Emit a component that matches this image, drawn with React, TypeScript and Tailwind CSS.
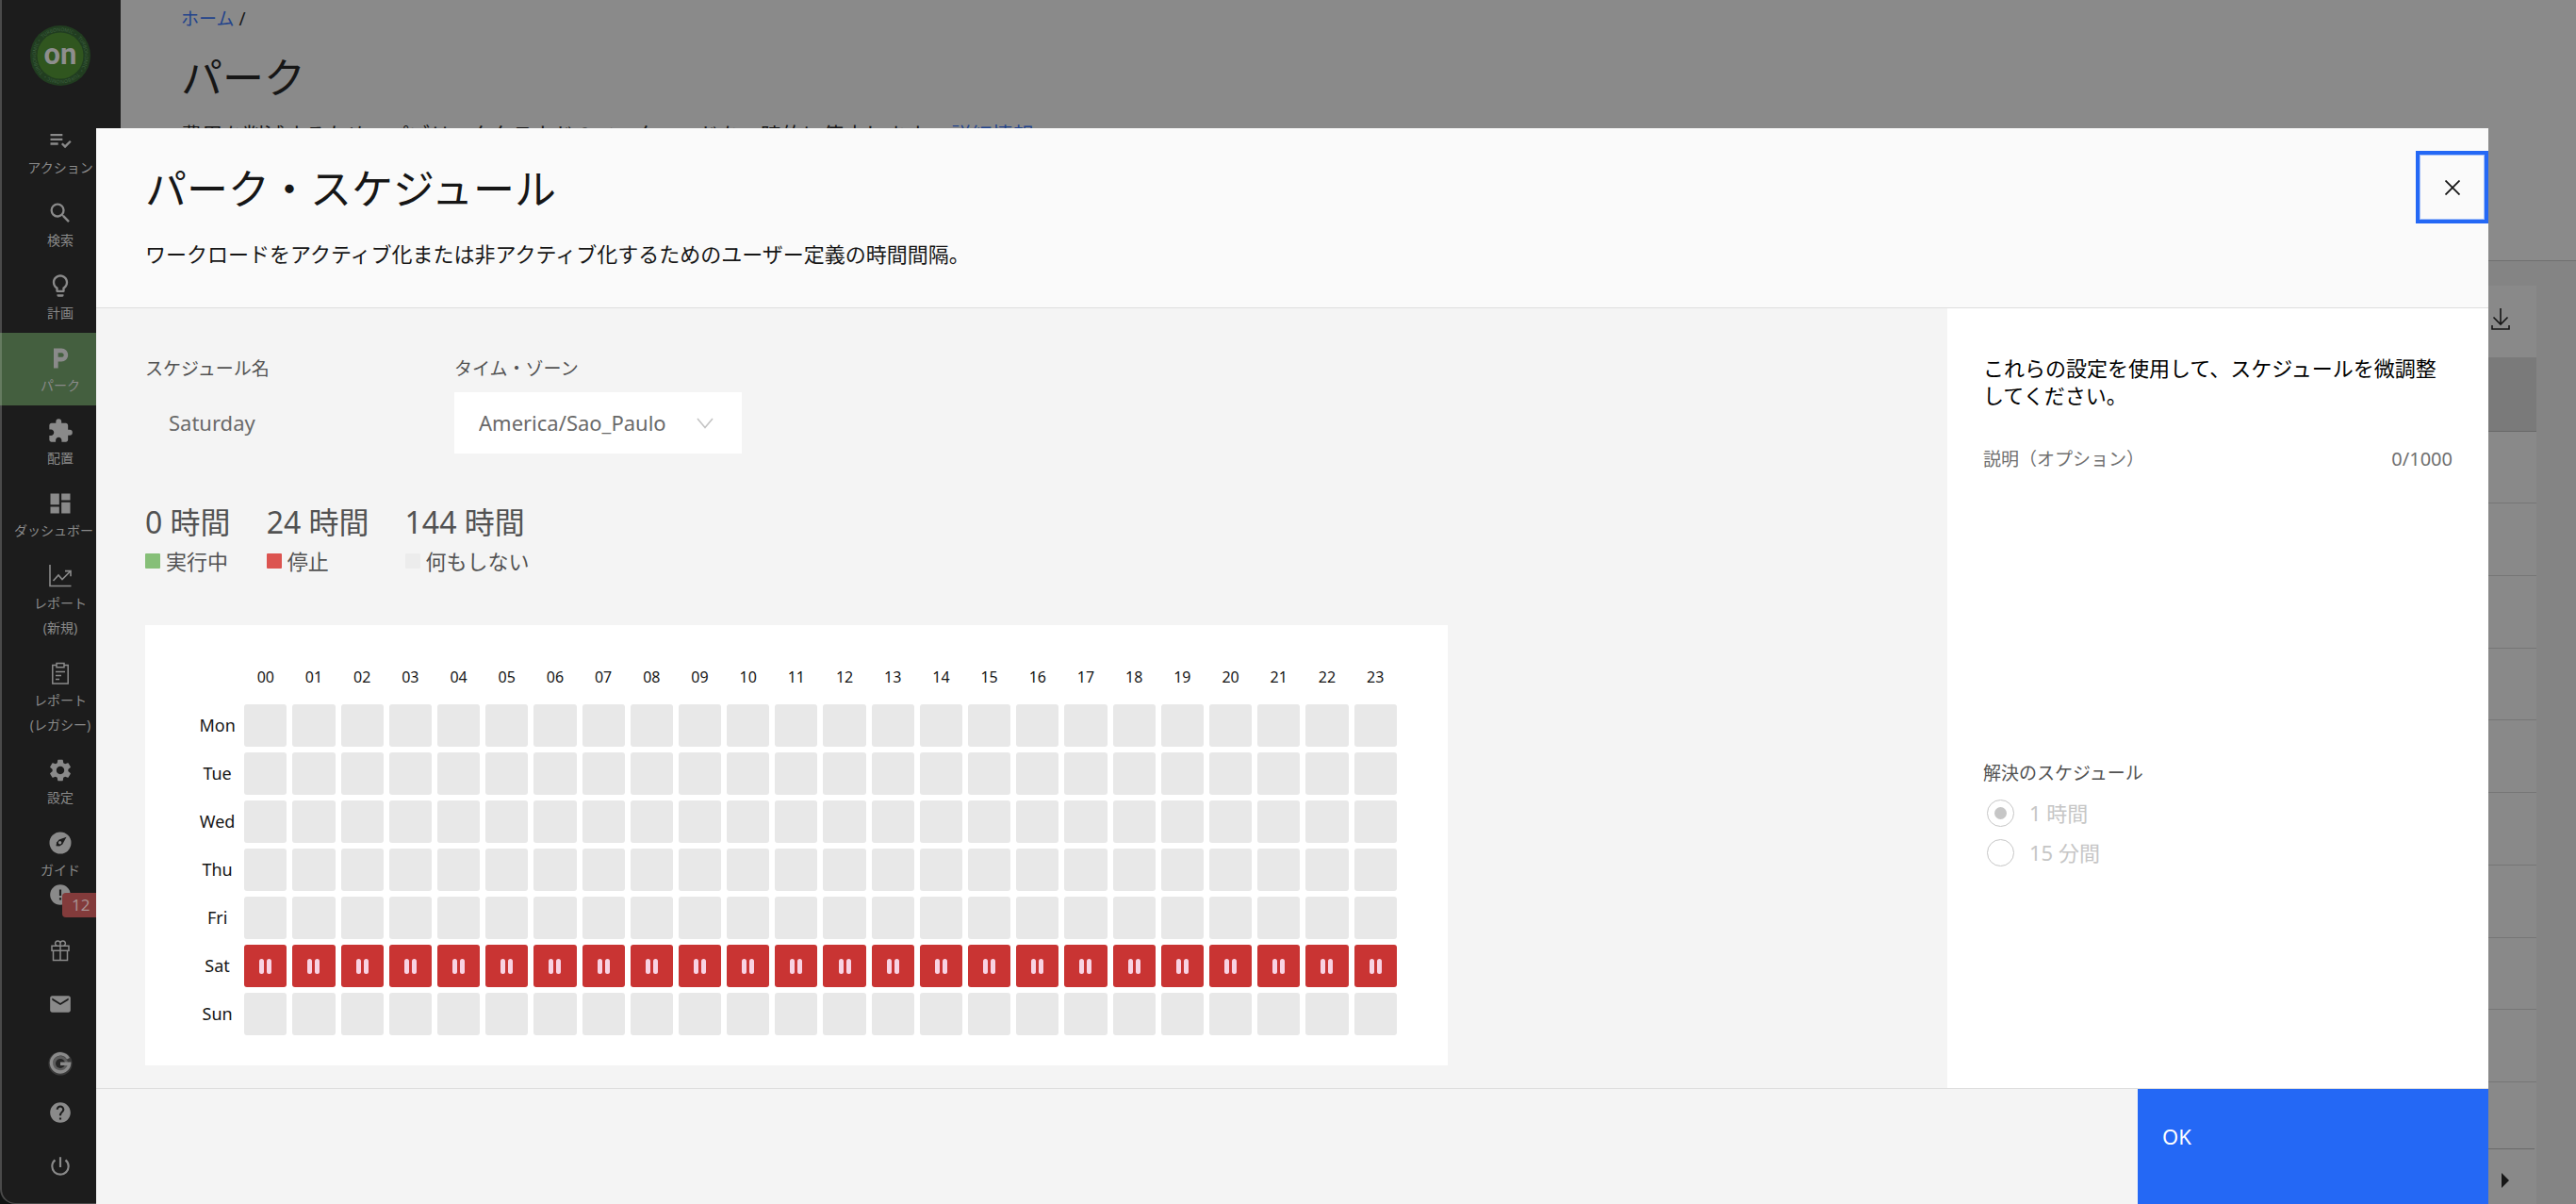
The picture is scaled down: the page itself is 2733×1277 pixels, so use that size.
import type { ReactNode } from "react";
import {
  MdDashboard,
  MdError,
  MdExtension,
  MdHelp,
  MdLightbulbOutline,
  MdLocalParking,
  MdMail,
  MdPlaylistAddCheck,
  MdPowerSettingsNew,
  MdSearch,
  MdSettings,
} from "react-icons/md";

const ChartIcon = () => (
  <svg viewBox="0 0 26 26" className="size-[26px] shrink-0" fill="none" stroke="currentColor" strokeWidth="1.6" aria-hidden="true">
    <path d="M2 1v22.5h22.5M5.5 18l5.5-6 4 4.5L23.5 8M18 7.6h6v5.6" />
  </svg>
);

const ClipboardIcon = () => (
  <svg viewBox="0 0 26 26" className="size-[26px] shrink-0" fill="none" stroke="currentColor" strokeWidth="1.5" aria-hidden="true">
    <path d="M9 4.5H4.8V24h16.4V4.5H17M9 2.5h8v4.2H9zM8 11.5h10M8 15.5h6M8 19.5h4" />
  </svg>
);

const CompassIcon = () => (
  <svg viewBox="0 0 26 26" className="size-[26px] shrink-0" aria-hidden="true">
    <circle cx="13" cy="13" r="11.5" fill="currentColor" />
    <path d="M19.5 6.8l-4.2 7.8-3.2 1.8-3.6-.2.6-3.8 2.6-3z" fill="#1c1c1c" />
    <circle cx="12.6" cy="12.8" r="1.7" fill="currentColor" />
  </svg>
);

const GiftIcon = () => (
  <svg viewBox="0 0 26 26" className="size-[26px]" fill="none" stroke="currentColor" strokeWidth="1.5" aria-hidden="true">
    <path d="M4 8.2h18v5H4zM5.5 13.2h15v10.2h-15zM13 8.2v15.2M13 8.2H9.6a2.7 2.7 0 1 1 3.4-3zM13 8.2h3.4a2.7 2.7 0 1 0-3.4-3z" />
  </svg>
);

const GIcon = () => (
  <svg viewBox="0 0 26 26" className="size-[26px]" aria-hidden="true">
    <circle cx="13" cy="13" r="12.6" fill="#3a3a3a" />
    <circle cx="13" cy="13" r="8" fill="#5c5c5c" />
    <circle cx="13" cy="13" r="5" fill="#262626" />
    <path d="M21.500 7.800a9.600 9.600 0 1 0 1.100 5.400H13" fill="none" stroke="currentColor" strokeWidth="3.400" />
  </svg>
);

const Logo = () => (
  <svg viewBox="0 0 64 64" className="size-16" role="img" aria-label="Turbonomic">
    <defs>
      <path id="ring-top" d="M13.600 13.600A26 26 0 0 1 50.400 13.600" />
      <path id="ring-right" d="M50.400 13.600A26 26 0 0 1 50.400 50.400" />
      <path id="ring-bottom" d="M50.400 50.400A26 26 0 0 1 13.600 50.400" />
      <path id="ring-left" d="M13.600 50.400A26 26 0 0 1 13.600 13.600" />
    </defs>
    <circle cx="32" cy="32" r="32" fill="#213d20" />
    <circle cx="32" cy="32" r="24.500" fill="#30561f" />
    {["#ring-top", "#ring-right", "#ring-bottom", "#ring-left"].map((arc) => (
      <text key={arc} fontSize="5" fill="#3f6040" fontFamily="Noto Sans, sans-serif">
        <textPath href={arc}>TURBONOMIC •</textPath>
      </text>
    ))}
    <text x="32" y="41" textAnchor="middle" fontSize="31" fontWeight="700" fill="#8e8e8e" fontFamily="Roboto, sans-serif">
      on
    </text>
  </svg>
);

type NavItem = { icon: ReactNode; lines: string[]; active?: boolean };

const navItems: NavItem[] = [
  { icon: <MdPlaylistAddCheck size={28} />, lines: ["アクション"] },
  { icon: <MdSearch size={28} />, lines: ["検索"] },
  { icon: <MdLightbulbOutline size={28} />, lines: ["計画"] },
  { icon: <MdLocalParking size={28} />, lines: ["パーク"], active: true },
  { icon: <MdExtension size={28} />, lines: ["配置"] },
  { icon: <MdDashboard size={28} />, lines: ["ダッシュボード"] },
  { icon: <ChartIcon />, lines: ["レポート", "(新規)"] },
  { icon: <ClipboardIcon />, lines: ["レポート", "(レガシー)"] },
  { icon: <MdSettings size={28} />, lines: ["設定"] },
  { icon: <CompassIcon />, lines: ["ガイド"] },
];

const Sidebar = () => (
  <aside className="w-32 shrink-0 bg-[#101212]">
    <nav className="flex h-full flex-col rounded-bl-2xl border-b border-l-2 border-[#4a4a4a] bg-[#1c1c1c] text-[#8a8a8a]">
      <a href="#home" className="mt-[27px] mb-[31px] -ml-0.5 self-center">
        <Logo />
      </a>
      {navItems.map((item) => (
        <a
          key={item.lines.join("")}
          href="#nav"
          className={`-ml-0.5 flex shrink-0 flex-col items-center pt-[13px] ${item.lines.length > 1 ? "h-[103px]" : "h-[77px] last-of-type:h-[59px]"} ${
            item.active ? "border-l-2 border-[#657b60] bg-[#445f3f] pr-0.5" : ""
          }`}
        >
          <span className="flex h-7 shrink-0 items-center">{item.icon}</span>
          <span className="mt-0.5 flex flex-col items-center text-sm leading-[26px] whitespace-nowrap">
            {item.lines.map((line) => (
              <span key={line}>{line}</span>
            ))}
          </span>
        </a>
      ))}
      <button type="button" aria-label="通知" className="relative mt-2.5 -ml-0.5 self-center">
        <MdError size={26} />
        <span className="absolute top-[11px] left-[15px] h-[26px] w-12 rounded bg-[#833b3b] pl-2.5 text-left text-[17px] leading-[26px] text-[#a89090]">12</span>
      </button>
      <button type="button" aria-label="新機能" className="mt-[33px] -ml-0.5 self-center">
        <GiftIcon />
      </button>
      <button type="button" aria-label="メール" className="mt-[31px] -ml-0.5 self-center">
        <MdMail size={26} />
      </button>
      <button type="button" aria-label="グリーンサークル" className="mt-[37px] -ml-0.5 self-center">
        <GIcon />
      </button>
      <button type="button" aria-label="ヘルプ" className="mt-[26px] -ml-0.5 self-center">
        <MdHelp size={26} />
      </button>
      <button type="button" aria-label="ログアウト" className="mt-[31px] -ml-0.5 self-center">
        <MdPowerSettingsNew size={26} />
      </button>
    </nav>
  </aside>
);

const Background = () => (
  <main className="flex min-w-0 flex-1 flex-col bg-[#848484] text-[#161616]">
    <header className="h-[277px] shrink-0 border-b border-[#6f6f6f] bg-[#8a8a8a] pl-16">
      <p className="pt-1.5 text-[19px] leading-7">
        <a href="#home" className="text-[#23448c]">
          ホーム
        </a>{" "}
        /
      </p>
      <h1 className="mt-[18px] text-[44px] leading-[60px]">パーク</h1>
      <p className="mt-4 text-[22px] leading-7">
        費用を削減するため、パブリッククラウドのワークロードを一時的に停止します。{" "}
        <a href="#more" className="text-[#23448c]">
          詳細情報
        </a>
      </p>
    </header>
    <section className="mt-[26px] mr-[42px] ml-16 flex flex-1 flex-col bg-[#898989]">
      <div className="flex h-[76px] items-center justify-end pr-[25px] pb-1">
        <button type="button" aria-label="ダウンロード">
          <svg viewBox="0 0 26 26" className="size-[26px]" fill="none" stroke="currentColor" strokeWidth="1.6" aria-hidden="true">
            <path d="M13 1v17M5.5 10.500L13 18l7.500-7.500M4 19v4h18v-4" />
          </svg>
        </button>
      </div>
      <div className="h-[79px] border-b border-[#696969] bg-[#7a7a7a]" />
      <div className="flex h-[760px] flex-col">
        {["h-[76px]", "h-[77px]", "h-[77px]", "h-[76px]", "h-[77px]", "h-[77px]", "h-[77px]", "h-[76px]", "h-[77px]"].map((height, row) => (
          <div key={row} className={`shrink-0 border-b border-[#767676] ${height}`} />
        ))}
      </div>
      <div className="mr-0.5 flex flex-1 items-center justify-end border-t border-[#696969] pt-2 pr-[27px]">
        <button type="button" aria-label="次のページ">
          <svg viewBox="0 0 8 16" className="h-4 w-2" fill="currentColor" aria-hidden="true">
            <path d="M0 0l8 8-8 8z" />
          </svg>
        </button>
      </div>
    </section>
  </main>
);

const hours = Array.from({ length: 24 }, (_, hour) => String(hour).padStart(2, "0"));
const days = ["Mon", "Tue", "Wed", "Thu", "Fri", "Sat", "Sun"];

const ScheduleGrid = () => (
  <div className="w-[1382px] max-w-full bg-white px-12 py-[26px]">
    <table className="w-full table-fixed border-separate border-spacing-[6px]">
      <thead>
        <tr className="h-[46px]">
          <td />
          {hours.map((hour) => (
            <th key={hour} scope="col" className="p-0 text-center text-base font-normal text-[#161616]">
              {hour}
            </th>
          ))}
        </tr>
      </thead>
      <tbody>
        {days.map((day) => (
          <tr key={day} className="h-[45px]">
            <th scope="row" className="p-0 text-center text-[18px] font-normal text-[#161616]">
              {day}
            </th>
            {hours.map((hour) => (
              <td key={hour} className={`rounded-[3px] p-0 ${day === "Sat" ? "bg-[#c93433]" : "bg-[#e8e8e8]"}`}>
                {day === "Sat" && (
                  <span className="flex justify-center gap-[3px]" role="img" aria-label="停止">
                    <span className="h-4 w-[5px] rounded-sm bg-[#f8d3e3]" />
                    <span className="h-4 w-[5px] rounded-sm bg-[#f8d3e3]" />
                  </span>
                )}
              </td>
            ))}
          </tr>
        ))}
      </tbody>
    </table>
  </div>
);

const stats = [
  { value: "0 時間", label: "実行中", swatch: "bg-[#86bf78]" },
  { value: "24 時間", label: "停止", swatch: "bg-[#dc5450]" },
  { value: "144 時間", label: "何もしない", swatch: "bg-[#ececec]" },
];

const ScheduleDialog = () => (
  <div
    role="dialog"
    aria-labelledby="dialog-title"
    className="absolute top-[136px] right-[93px] bottom-0 left-[102px] flex flex-col bg-[#f4f4f4] text-[#161616]"
  >
    <header className="flex shrink-0 items-start justify-between border-b border-[#dedede] bg-[#fafafa] pl-[52px]">
      <div className="pt-[34px] pb-[43px]">
        <h2 id="dialog-title" className="text-[44px] leading-[60px]">
          パーク・スケジュール
        </h2>
        <p className="mt-[25px] text-[22px] leading-7">ワークロードをアクティブ化または非アクティブ化するためのユーザー定義の時間間隔。</p>
      </div>
      <button
        type="button"
        aria-label="閉じる"
        className="mt-6 flex size-[77px] items-center justify-center border-4 border-[#2468f5] inset-ring inset-ring-[#a5c0f8]"
      >
        <svg viewBox="0 0 16 16" className="size-4" stroke="currentColor" strokeWidth="1.8" aria-hidden="true">
          <path d="M.5.5l15 15M15.500.5l-15 15" />
        </svg>
      </button>
    </header>

    <div className="flex h-[828px] shrink-0 border-b border-[#dedede]">
      <div className="min-w-0 flex-1 pl-[52px] text-[#525252]">
        <div className="flex gap-6 pt-[50px]">
          <div className="flex w-[304px] flex-col">
            <label htmlFor="schedule-name" className="text-[19px] leading-7">
              スケジュール名
            </label>
            <input
              id="schedule-name"
              readOnly
              value="Saturday"
              className="mt-[11px] h-16 bg-transparent px-[25px] text-[22px] text-[#6a6a6a] outline-none"
            />
          </div>
          <div className="flex w-[305px] flex-col">
            <label htmlFor="time-zone" className="text-[19px] leading-7">
              タイム・ゾーン
            </label>
            <div className="relative mt-[11px]">
              <select
                id="time-zone"
                className="h-[65px] w-full appearance-none bg-white pr-14 pl-[26px] text-[22px] text-[#6a6a6a] outline-none"
              >
                <option>America/Sao_Paulo</option>
              </select>
              <svg
                viewBox="0 0 18 12"
                className="pointer-events-none absolute top-[27px] right-[30px] h-3 w-[18px]"
                fill="none"
                stroke="#c4c4c4"
                strokeWidth="1.6"
                aria-hidden="true"
              >
                <path d="M1 1l8 9.500L17 1" />
              </svg>
            </div>
          </div>
        </div>

        <dl className="mt-[53px] flex gap-[38px]">
          {stats.map((stat) => (
            <div key={stat.label} className="flex flex-col-reverse">
              <dt className="mt-[3px] flex items-center gap-1.5 text-[22px] leading-9">
                <span className={`size-4 rounded-[1px] ${stat.swatch}`} />
                {stat.label}
              </dt>
              <dd className="text-[32px] leading-10">{stat.value}</dd>
            </div>
          ))}
        </dl>

        <div className="mt-[50px]">
          <ScheduleGrid />
        </div>
      </div>

      <aside className="w-[574px] shrink-0 bg-white px-[38px] pt-[49px]">
        <p className="text-[22px] leading-[29px] text-black">これらの設定を使用して、スケジュールを微調整してください。</p>
        <div className="mt-[39px] flex items-center justify-between leading-7 text-[#6f6f6f]">
          <label htmlFor="description" className="text-[19px]">
            説明（オプション）
          </label>
          <span className="text-[20px]">0/1000</span>
        </div>
        <textarea id="description" disabled className="mt-3 block h-[260px] w-full resize-none bg-white" />
        <fieldset disabled className="mt-[33px] text-[#c6c6c6]">
          <legend className="text-[19px] leading-7 text-[#525252]">解決のスケジュール</legend>
          {["1 時間", "15 分間"].map((label, index) => (
            <label key={label} className={`ml-1 flex items-center gap-4 text-[22px] leading-[30px] ${index === 0 ? "mt-[13px]" : "mt-3"}`}>
              <span className="relative flex">
                <input
                  type="radio"
                  name="resolution"
                  defaultChecked={index === 0}
                  className="peer size-[29px] appearance-none rounded-full border border-[#c6c6c6]"
                />
                <span className="absolute top-2 left-2 hidden size-[13px] rounded-full bg-[#c6c6c6] peer-checked:block" />
              </span>
              {label}
            </label>
          ))}
        </fieldset>
      </aside>
    </div>

    <footer className="flex flex-1 justify-end">
      <button type="button" className="flex w-[372px] items-start bg-[#2468f5] px-[26px] pt-9 text-[22px] leading-7 text-white">
        OK
      </button>
    </footer>
  </div>
);

export default function App() {
  return (
    <div
      lang="ja"
      className="relative flex h-screen overflow-hidden font-['Noto_Sans','Noto_Sans_CJK_JP',sans-serif]"
    >
      <Sidebar />
      <Background />
      <ScheduleDialog />
    </div>
  );
}
